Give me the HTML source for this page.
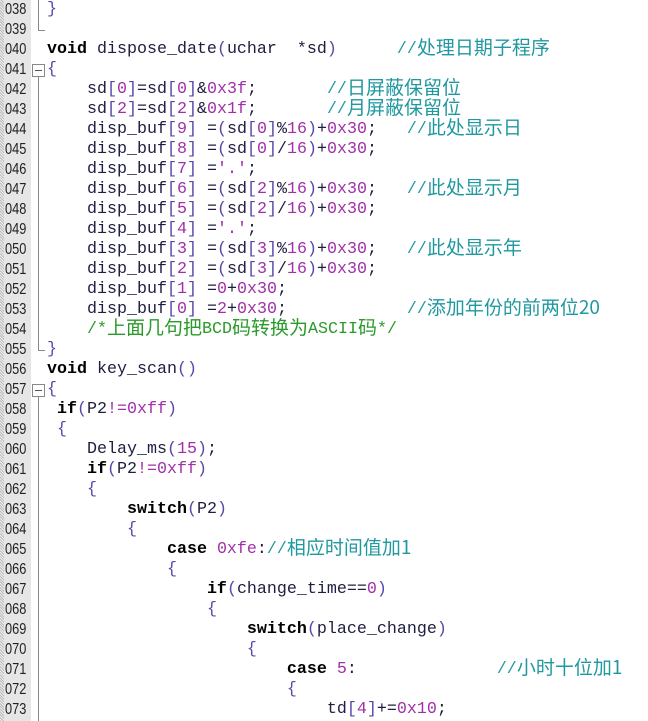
<!DOCTYPE html>
<html><head><meta charset="utf-8"><style>
html,body{margin:0;padding:0;background:#fff;width:648px;height:721px;overflow:hidden;}
#g{position:absolute;left:0;top:0;width:31px;height:721px;background:#e6e6e6;}
#h{position:absolute;left:0;top:0;width:4px;height:721px;background:repeating-linear-gradient(45deg,#bbb 0 1px,#eee 1px 2px);}
.ln{position:absolute;left:5px;width:30px;height:20px;line-height:20px;font-family:"Liberation Sans",sans-serif;font-size:16px;color:#222;transform:scaleX(0.8);transform-origin:0 50%;}
.cd{position:absolute;left:47px;height:20px;line-height:20px;font-family:"Liberation Mono",monospace;font-size:16.67px;color:#1e1e40;white-space:pre;}
.k{font-weight:bold;color:#000;}
.n{color:#a030a8;}
.p{color:#5a48a8;}
.c{color:#2098a0;}
.g{color:#2a9a2a;}
.z{font-family:"Noto Sans CJK SC",sans-serif;font-size:19px;line-height:0;position:relative;top:1px;}
.fl{position:absolute;background:#888;}
.bx{position:absolute;width:11px;height:11px;border:1px solid #888;background:#fff;}
.bx:after{content:"";position:absolute;left:2px;top:5px;width:7px;height:1px;background:#555;}
</style></head><body>
<div id="g"></div><div id="h"></div>
<div class="fl" style="left:38px;top:0;width:1px;height:30px"></div>
<div class="fl" style="left:38px;top:30px;width:7px;height:1px"></div>
<div class="bx" style="left:32px;top:64px"></div>
<div class="fl" style="left:38px;top:77px;width:1px;height:273px"></div>
<div class="fl" style="left:38px;top:350px;width:7px;height:1px"></div>
<div class="bx" style="left:32px;top:384px"></div>
<div class="fl" style="left:38px;top:397px;width:1px;height:324px"></div>

<div class="ln" style="top:0">038</div><div class="cd" style="top:0"><span class="p">}</span></div>
<div class="ln" style="top:20px">039</div>
<div class="ln" style="top:40px">040</div><div class="cd" style="top:40px"><span class="k">void</span> dispose_date<span class="p">(</span>uchar  *sd<span class="p">)</span>      <span class="c">//<span class="z">处理日期子程序</span></span></div>
<div class="ln" style="top:60px">041</div><div class="cd" style="top:60px"><span class="p">{</span></div>
<div class="ln" style="top:80px">042</div><div class="cd" style="top:80px">    sd<span class="p">[</span><span class="n">0</span><span class="p">]</span>=sd<span class="p">[</span><span class="n">0</span><span class="p">]</span>&amp;<span class="n">0x3f</span>;       <span class="c">//<span class="z">日屏蔽保留位</span></span></div>
<div class="ln" style="top:100px">043</div><div class="cd" style="top:100px">    sd<span class="p">[</span><span class="n">2</span><span class="p">]</span>=sd<span class="p">[</span><span class="n">2</span><span class="p">]</span>&amp;<span class="n">0x1f</span>;       <span class="c">//<span class="z">月屏蔽保留位</span></span></div>
<div class="ln" style="top:120px">044</div><div class="cd" style="top:120px">    disp_buf<span class="p">[</span><span class="n">9</span><span class="p">]</span> =<span class="p">(</span>sd<span class="p">[</span><span class="n">0</span><span class="p">]</span>%<span class="n">16</span><span class="p">)</span>+<span class="n">0x30</span>;   <span class="c">//<span class="z">此处显示日</span></span></div>
<div class="ln" style="top:140px">045</div><div class="cd" style="top:140px">    disp_buf<span class="p">[</span><span class="n">8</span><span class="p">]</span> =<span class="p">(</span>sd<span class="p">[</span><span class="n">0</span><span class="p">]</span>/<span class="n">16</span><span class="p">)</span>+<span class="n">0x30</span>;</div>
<div class="ln" style="top:160px">046</div><div class="cd" style="top:160px">    disp_buf<span class="p">[</span><span class="n">7</span><span class="p">]</span> =<span class="n">'.'</span>;</div>
<div class="ln" style="top:180px">047</div><div class="cd" style="top:180px">    disp_buf<span class="p">[</span><span class="n">6</span><span class="p">]</span> =<span class="p">(</span>sd<span class="p">[</span><span class="n">2</span><span class="p">]</span>%<span class="n">16</span><span class="p">)</span>+<span class="n">0x30</span>;   <span class="c">//<span class="z">此处显示月</span></span></div>
<div class="ln" style="top:200px">048</div><div class="cd" style="top:200px">    disp_buf<span class="p">[</span><span class="n">5</span><span class="p">]</span> =<span class="p">(</span>sd<span class="p">[</span><span class="n">2</span><span class="p">]</span>/<span class="n">16</span><span class="p">)</span>+<span class="n">0x30</span>;</div>
<div class="ln" style="top:220px">049</div><div class="cd" style="top:220px">    disp_buf<span class="p">[</span><span class="n">4</span><span class="p">]</span> =<span class="n">'.'</span>;</div>
<div class="ln" style="top:240px">050</div><div class="cd" style="top:240px">    disp_buf<span class="p">[</span><span class="n">3</span><span class="p">]</span> =<span class="p">(</span>sd<span class="p">[</span><span class="n">3</span><span class="p">]</span>%<span class="n">16</span><span class="p">)</span>+<span class="n">0x30</span>;   <span class="c">//<span class="z">此处显示年</span></span></div>
<div class="ln" style="top:260px">051</div><div class="cd" style="top:260px">    disp_buf<span class="p">[</span><span class="n">2</span><span class="p">]</span> =<span class="p">(</span>sd<span class="p">[</span><span class="n">3</span><span class="p">]</span>/<span class="n">16</span><span class="p">)</span>+<span class="n">0x30</span>;</div>
<div class="ln" style="top:280px">052</div><div class="cd" style="top:280px">    disp_buf<span class="p">[</span><span class="n">1</span><span class="p">]</span> =<span class="n">0</span>+<span class="n">0x30</span>;</div>
<div class="ln" style="top:300px">053</div><div class="cd" style="top:300px">    disp_buf<span class="p">[</span><span class="n">0</span><span class="p">]</span> =<span class="n">2</span>+<span class="n">0x30</span>;            <span class="c">//<span class="z">添加年份的前两位20</span></span></div>
<div class="ln" style="top:320px">054</div><div class="cd" style="top:320px">    <span class="g">/*<span class="z">上面几句把</span>BCD<span class="z">码转换为</span>ASCII<span class="z">码</span>*/</span></div>
<div class="ln" style="top:340px">055</div><div class="cd" style="top:340px"><span class="p">}</span></div>
<div class="ln" style="top:360px">056</div><div class="cd" style="top:360px"><span class="k">void</span> key_scan<span class="p">()</span></div>
<div class="ln" style="top:380px">057</div><div class="cd" style="top:380px"><span class="p">{</span></div>
<div class="ln" style="top:400px">058</div><div class="cd" style="top:400px"> <span class="k">if</span><span class="p">(</span>P2<span class="n">!=0xff</span><span class="p">)</span></div>
<div class="ln" style="top:420px">059</div><div class="cd" style="top:420px"> <span class="p">{</span></div>
<div class="ln" style="top:440px">060</div><div class="cd" style="top:440px">    Delay_ms<span class="p">(</span><span class="n">15</span><span class="p">)</span>;</div>
<div class="ln" style="top:460px">061</div><div class="cd" style="top:460px">    <span class="k">if</span><span class="p">(</span>P2<span class="n">!=0xff</span><span class="p">)</span></div>
<div class="ln" style="top:480px">062</div><div class="cd" style="top:480px">    <span class="p">{</span></div>
<div class="ln" style="top:500px">063</div><div class="cd" style="top:500px">        <span class="k">switch</span><span class="p">(</span>P2<span class="p">)</span></div>
<div class="ln" style="top:520px">064</div><div class="cd" style="top:520px">        <span class="p">{</span></div>
<div class="ln" style="top:540px">065</div><div class="cd" style="top:540px">            <span class="k">case</span> <span class="n">0xfe</span>:<span class="c">//<span class="z">相应时间值加1</span></span></div>
<div class="ln" style="top:560px">066</div><div class="cd" style="top:560px">            <span class="p">{</span></div>
<div class="ln" style="top:580px">067</div><div class="cd" style="top:580px">                <span class="k">if</span><span class="p">(</span>change_time==<span class="n">0</span><span class="p">)</span></div>
<div class="ln" style="top:600px">068</div><div class="cd" style="top:600px">                <span class="p">{</span></div>
<div class="ln" style="top:620px">069</div><div class="cd" style="top:620px">                    <span class="k">switch</span><span class="p">(</span>place_change<span class="p">)</span></div>
<div class="ln" style="top:640px">070</div><div class="cd" style="top:640px">                    <span class="p">{</span></div>
<div class="ln" style="top:660px">071</div><div class="cd" style="top:660px">                        <span class="k">case</span> <span class="n">5</span>:              <span class="c">//<span class="z">小时十位加1</span></span></div>
<div class="ln" style="top:680px">072</div><div class="cd" style="top:680px">                        <span class="p">{</span></div>
<div class="ln" style="top:700px">073</div><div class="cd" style="top:700px">                            td<span class="p">[</span><span class="n">4</span><span class="p">]</span>+=<span class="n">0x10</span>;</div>
</body></html>
